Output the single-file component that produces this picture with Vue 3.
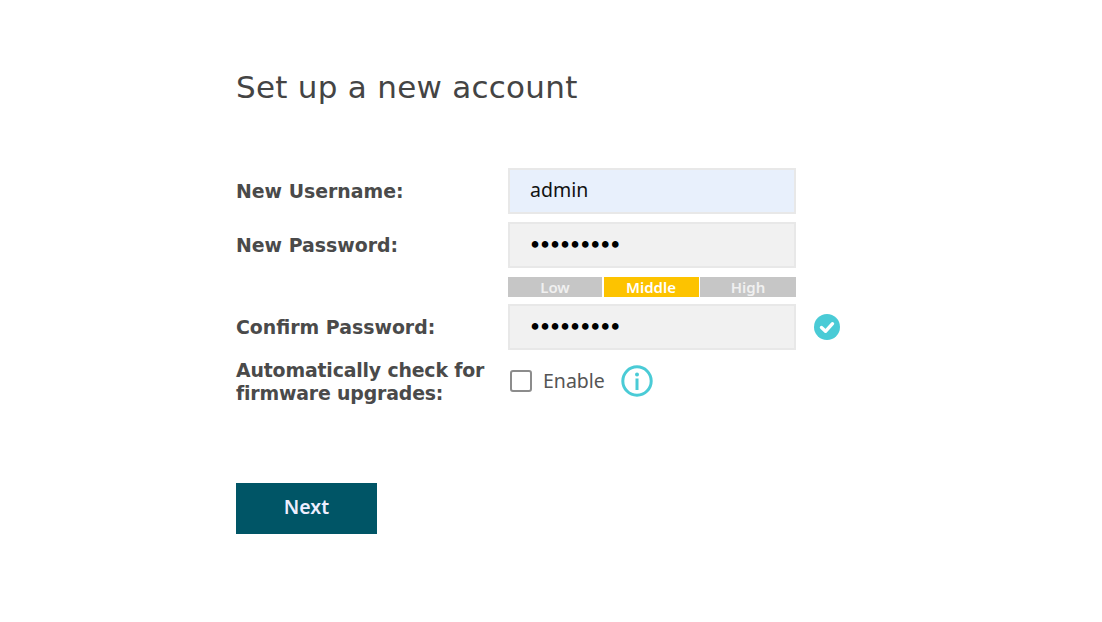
<script setup>
import { ref } from 'vue'

const username = ref('admin')
const password = ref('123456789')
const confirm = ref('123456789')
const autoUpgrade = ref(false)

const levels = [
  { name: 'Low', active: false },
  { name: 'Middle', active: true },
  { name: 'High', active: false }
]
</script>

<template>
  <div class="page">
    <h1 class="title">Set up a new account</h1>

    <form class="form" @submit.prevent>
      <div class="row">
        <label class="label">New Username:</label>
        <input v-model="username" class="input filled" type="text" />
      </div>

      <div class="row">
        <label class="label">New Password:</label>
        <input v-model="password" class="input secret" type="password" />
      </div>

      <div class="row strength-row">
        <span class="label"></span>
        <div class="strength">
          <span
            v-for="level in levels"
            :key="level.name"
            class="level"
            :class="{ active: level.active }"
          >{{ level.name }}</span>
        </div>
      </div>

      <div class="row">
        <label class="label">Confirm Password:</label>
        <input v-model="confirm" class="input secret" type="password" />
        <svg class="ok" viewBox="0 0 26 26" width="26" height="26">
          <circle cx="13" cy="13" r="13" fill="#4acbd6" />
          <path d="M7.5 13.5l4 3.8 7-7.6" fill="none" stroke="#fff" stroke-width="3.4" stroke-linecap="round" stroke-linejoin="round" />
        </svg>
      </div>

      <div class="row check-row">
        <label class="label tight">Automatically check for firmware upgrades:</label>
        <div class="check">
          <input v-model="autoUpgrade" class="box" type="checkbox" />
          <span class="enable">Enable</span>
          <svg class="info" viewBox="0 0 32 32" width="32" height="32">
            <circle cx="16" cy="16" r="14.2" fill="none" stroke="#4acbd6" stroke-width="3" />
            <circle cx="16" cy="9.4" r="2" fill="#4acbd6" />
            <rect x="14.5" y="13.5" width="3" height="11.5" fill="#4acbd6" />
          </svg>
        </div>
      </div>

      <button class="next" type="submit">Next</button>
    </form>
  </div>
</template>

<style scoped>
.page {
  box-sizing: border-box;
  width: 1102px;
  height: 622px;
  padding: 69px 0 0 236px;
  background: #fff;
  overflow: hidden;
}
.title {
  margin: 0 0 62px;
  font-family: "DejaVu Sans", sans-serif;
  font-size: 31px;
  line-height: 37px;
  font-weight: 400;
  letter-spacing: 0.27px;
  color: #444;
}
.form {
  display: flex;
  flex-direction: column;
}
.row {
  display: flex;
  align-items: center;
  margin-bottom: 8px;
}
.label {
  width: 272px;
  flex: none;
  font-family: "DejaVu Sans", sans-serif;
  font-size: 18.9px;
  line-height: 23px;
  font-weight: 700;
  color: #4a4a4a;
}
.label.tight {
  letter-spacing: -0.17px;
}
.input {
  box-sizing: border-box;
  width: 288px;
  height: 46px;
  padding: 0 20px 3px;
  border: 2px solid #e8e8e8;
  background: #f1f1f1;
  font-family: "Noto Sans", sans-serif;
  font-size: 19.5px;
  color: #111;
  outline: none;
}
.input.filled {
  background: #e8f0fc;
}
.input.secret {
  padding-bottom: 0;
  font-family: "DejaVu Sans", sans-serif;
  font-size: 17px;
  color: #000;
  -webkit-text-stroke: 1.6px #000;
}
.strength-row {
  margin: 1px 0 7px;
}
.strength {
  display: grid;
  grid-template-columns: 94px 95px 96px;
  gap: 1.5px;
  width: 288px;
  height: 20px;
}
.level {
  background: #c6c6c6;
  color: #f0f0f0;
  font-family: "Noto Sans", sans-serif;
  font-size: 15px;
  font-weight: 600;
  line-height: 20px;
  text-align: center;
}
.level.active {
  background: #fdc300;
  color: #fff;
}
.ok {
  margin-left: 18px;
}
.check-row {
  margin: 1px 0 0;
}
.check {
  display: flex;
  align-items: center;
  margin-bottom: 2px;
}
.box {
  appearance: none;
  box-sizing: border-box;
  width: 22px;
  height: 22px;
  margin: 0 0 0 2px;
  border: 2px solid #8c8c8c;
  border-radius: 3px;
  background: #fff;
}
.enable {
  margin: 0 0 2px 11px;
  font-family: "Noto Sans", sans-serif;
  font-size: 19.5px;
  color: #555;
}
.info {
  margin-left: 16px;
}
.next {
  width: 141px;
  height: 51px;
  margin-top: 78px;
  padding: 0 0 4px;
  border: none;
  background: #005566;
  color: #eef;
  font-family: "Noto Sans", sans-serif;
  font-size: 19.5px;
  font-weight: 600;
  cursor: pointer;
}
</style>
